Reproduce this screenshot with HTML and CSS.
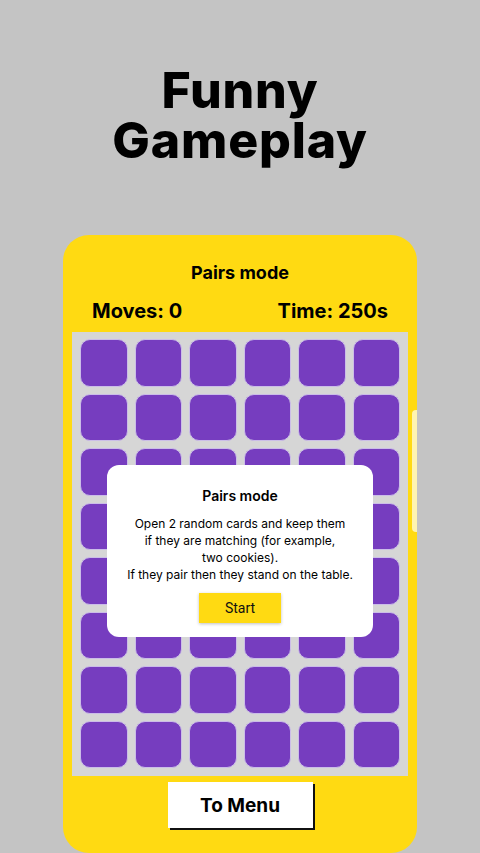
FILE: index.html
```html
<!doctype html>
<html>

<head>
    <meta name="viewport" content="width=device-width,initial-scale=1.0">
    <meta charset="utf-8" />
    <title>Funny Gameplay</title>
    <link rel="stylesheet" href="styles.css">
</head>

<body>
    <h1 class="promo__title">
        <span class="promo__line">Funny</span>
        <span class="promo__line">Gameplay</span>
    </h1>

    <div class="phone">
        <h2 class="phone__mode">Pairs mode</h2>
        <div class="phone__stats">
            <span>Moves: 0</span>
            <span>Time: 250s</span>
        </div>

        <div class="board">
            <div class="board__grid" id="grid"></div>

            <div class="dialog">
                <h3 class="dialog__title">Pairs mode</h3>
                <p class="dialog__text">
                    Open 2 random cards and keep them<br>
                    if they are matching (for example,<br>
                    two cookies).<br>
                    If they pair then they stand on the table.
                </p>
                <button class="dialog__btn">Start</button>
            </div>
        </div>

        <button class="phone__menu">To Menu</button>
        <div class="phone__scroll"></div>
    </div>

    <script>
        ;
        (function() {
            var grid = document.getElementById('grid');
            for (var i = 0; i < 48; i++) {
                var tile = document.createElement('div');
                tile.className = 'tile';
                grid.appendChild(tile);
            }
        })();
    </script>
</body>

</html>
```

FILE: styles.css
```css
html,
body {
    margin: 0;
    height: 853px;
    overflow: hidden;
}

body {
    background: #c4c4c4;
    font-family: Inter, "Noto Sans", sans-serif;
    color: #000;
    display: flex;
    flex-direction: column;
    align-items: center;
}

.promo__title {
    margin: 65px 0 0;
    display: flex;
    flex-direction: column;
    align-items: center;
    font-size: 50px;
    line-height: 50px;
    font-weight: 800;
    letter-spacing: 0.8px;
    text-align: center;
}

.promo__line {
    display: block;
    height: 50px;
}

.phone {
    position: relative;
    margin-top: 70px;
    width: 354px;
    height: 622px;
    box-sizing: border-box;
    padding: 26px 9px 0;
    border-radius: 26px;
    background: #ffda12;
    display: flex;
    flex-direction: column;
    align-items: center;
}

.phone__mode {
    margin: 0;
    font-size: 18px;
    line-height: 24px;
    font-weight: 700;
}

.phone__stats {
    align-self: stretch;
    display: flex;
    justify-content: space-between;
    margin-top: 13px;
    padding: 0 20px 0 20px;
    font-size: 20px;
    line-height: 26px;
    font-weight: 700;
}

.board {
    position: relative;
    align-self: stretch;
    margin-top: 8px;
    padding: 7px 8px 8px;
    background: #d6d6d6;
}

.board__grid {
    display: grid;
    grid-template-columns: repeat(6, 1fr);
    grid-auto-rows: 47.5px;
    gap: 7px;
}

.tile {
    border-radius: 10px;
    background: #763dbf;
    border: 1px solid #cbbde8;
}

.dialog {
    position: absolute;
    top: 133px;
    left: 35px;
    width: 266px;
    box-sizing: border-box;
    padding: 21px 10px 14px;
    border-radius: 12px;
    background: #fff;
    text-align: center;
}

.dialog__title {
    margin: 0;
    font-size: 14px;
    line-height: 20px;
    font-weight: 600;
}

.dialog__text {
    margin: 9px 0 0;
    font-size: 12px;
    line-height: 17px;
    font-weight: 400;
}

.dialog__btn {
    margin-top: 10px;
    width: 82px;
    height: 30px;
    border: 0;
    background: #ffda12;
    box-shadow: 0 1px 3px rgba(0, 0, 0, 0.25);
    font-family: Roboto, sans-serif;
    font-size: 14px;
    color: #111;
}

.phone__menu {
    margin-top: 6px;
    width: 145px;
    height: 46px;
    border: 0;
    background: #fff;
    box-shadow: 2px 2px 0 #111;
    font-family: Inter, sans-serif;
    font-size: 19px;
    font-weight: 700;
    color: #000;
}

.phone__scroll {
    position: absolute;
    top: 175px;
    right: 0;
    width: 5px;
    height: 122px;
    border-radius: 4px 0 0 4px;
    background: #fff4b0;
}
```
